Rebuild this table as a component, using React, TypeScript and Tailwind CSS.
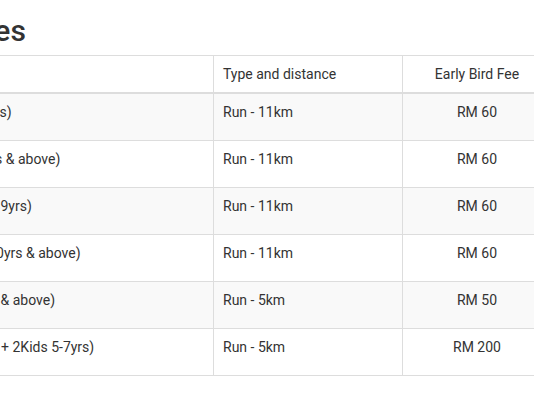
import React from "react";

const rows = [
  { cat: "Men Open (18-39yrs)", type: "Run - 11km", fee: "RM 60" },
  { cat: "Men Veteran (40yrs & above)", type: "Run - 11km", fee: "RM 60" },
  { cat: "Women Open (18-39yrs)", type: "Run - 11km", fee: "RM 60" },
  { cat: "Women Veteran (40yrs & above)", type: "Run - 11km", fee: "RM 60" },
  { cat: "Kids Fun Run (7yrs & above)", type: "Run - 5km", fee: "RM 50" },
  { cat: "Family Run (Adults + 2Kids 5-7yrs)", type: "Run - 5km", fee: "RM 200" },
];

export default function App() {
  return (
    <div
      className="w-[534px] h-[419px] overflow-hidden bg-white text-[#333]"
      style={{ fontFamily: "Roboto, 'Liberation Sans', sans-serif" }}
    >
      <div className="ml-[-127px] w-[680px]">
        <h2 className="h-[55px] pt-[14px] text-[30px] leading-[33px] font-medium text-[#333] whitespace-nowrap ml-[-67px]">
          Race Categories
        </h2>
        <div className="border-t border-[#ddd] text-[14px] leading-[20px]">
          <div className="flex border-b-2 border-[#ddd] h-[38px]">
            <div className="w-[341px] shrink-0 border-r border-[#ddd] p-2">Category</div>
            <div className="w-[189px] shrink-0 border-r border-[#ddd] py-2 pl-[9px] pr-2">Type and distance</div>
            <div className="w-[148px] shrink-0 p-2 text-center">Early Bird Fee</div>
          </div>
          {rows.map((r, i) => (
            <div
              key={i}
              className={`flex border-b border-[#ddd] h-[47px] ${i % 2 === 0 ? "bg-[#f9f9f9]" : "bg-white"}`}
            >
              <div className="w-[341px] shrink-0 border-r border-[#ddd] p-2 whitespace-nowrap">{r.cat}</div>
              <div className="w-[189px] shrink-0 border-r border-[#ddd] py-2 pl-[9px] pr-2">{r.type}</div>
              <div className="w-[148px] shrink-0 p-2 text-center">{r.fee}</div>
            </div>
          ))}
        </div>
      </div>
    </div>
  );
}
